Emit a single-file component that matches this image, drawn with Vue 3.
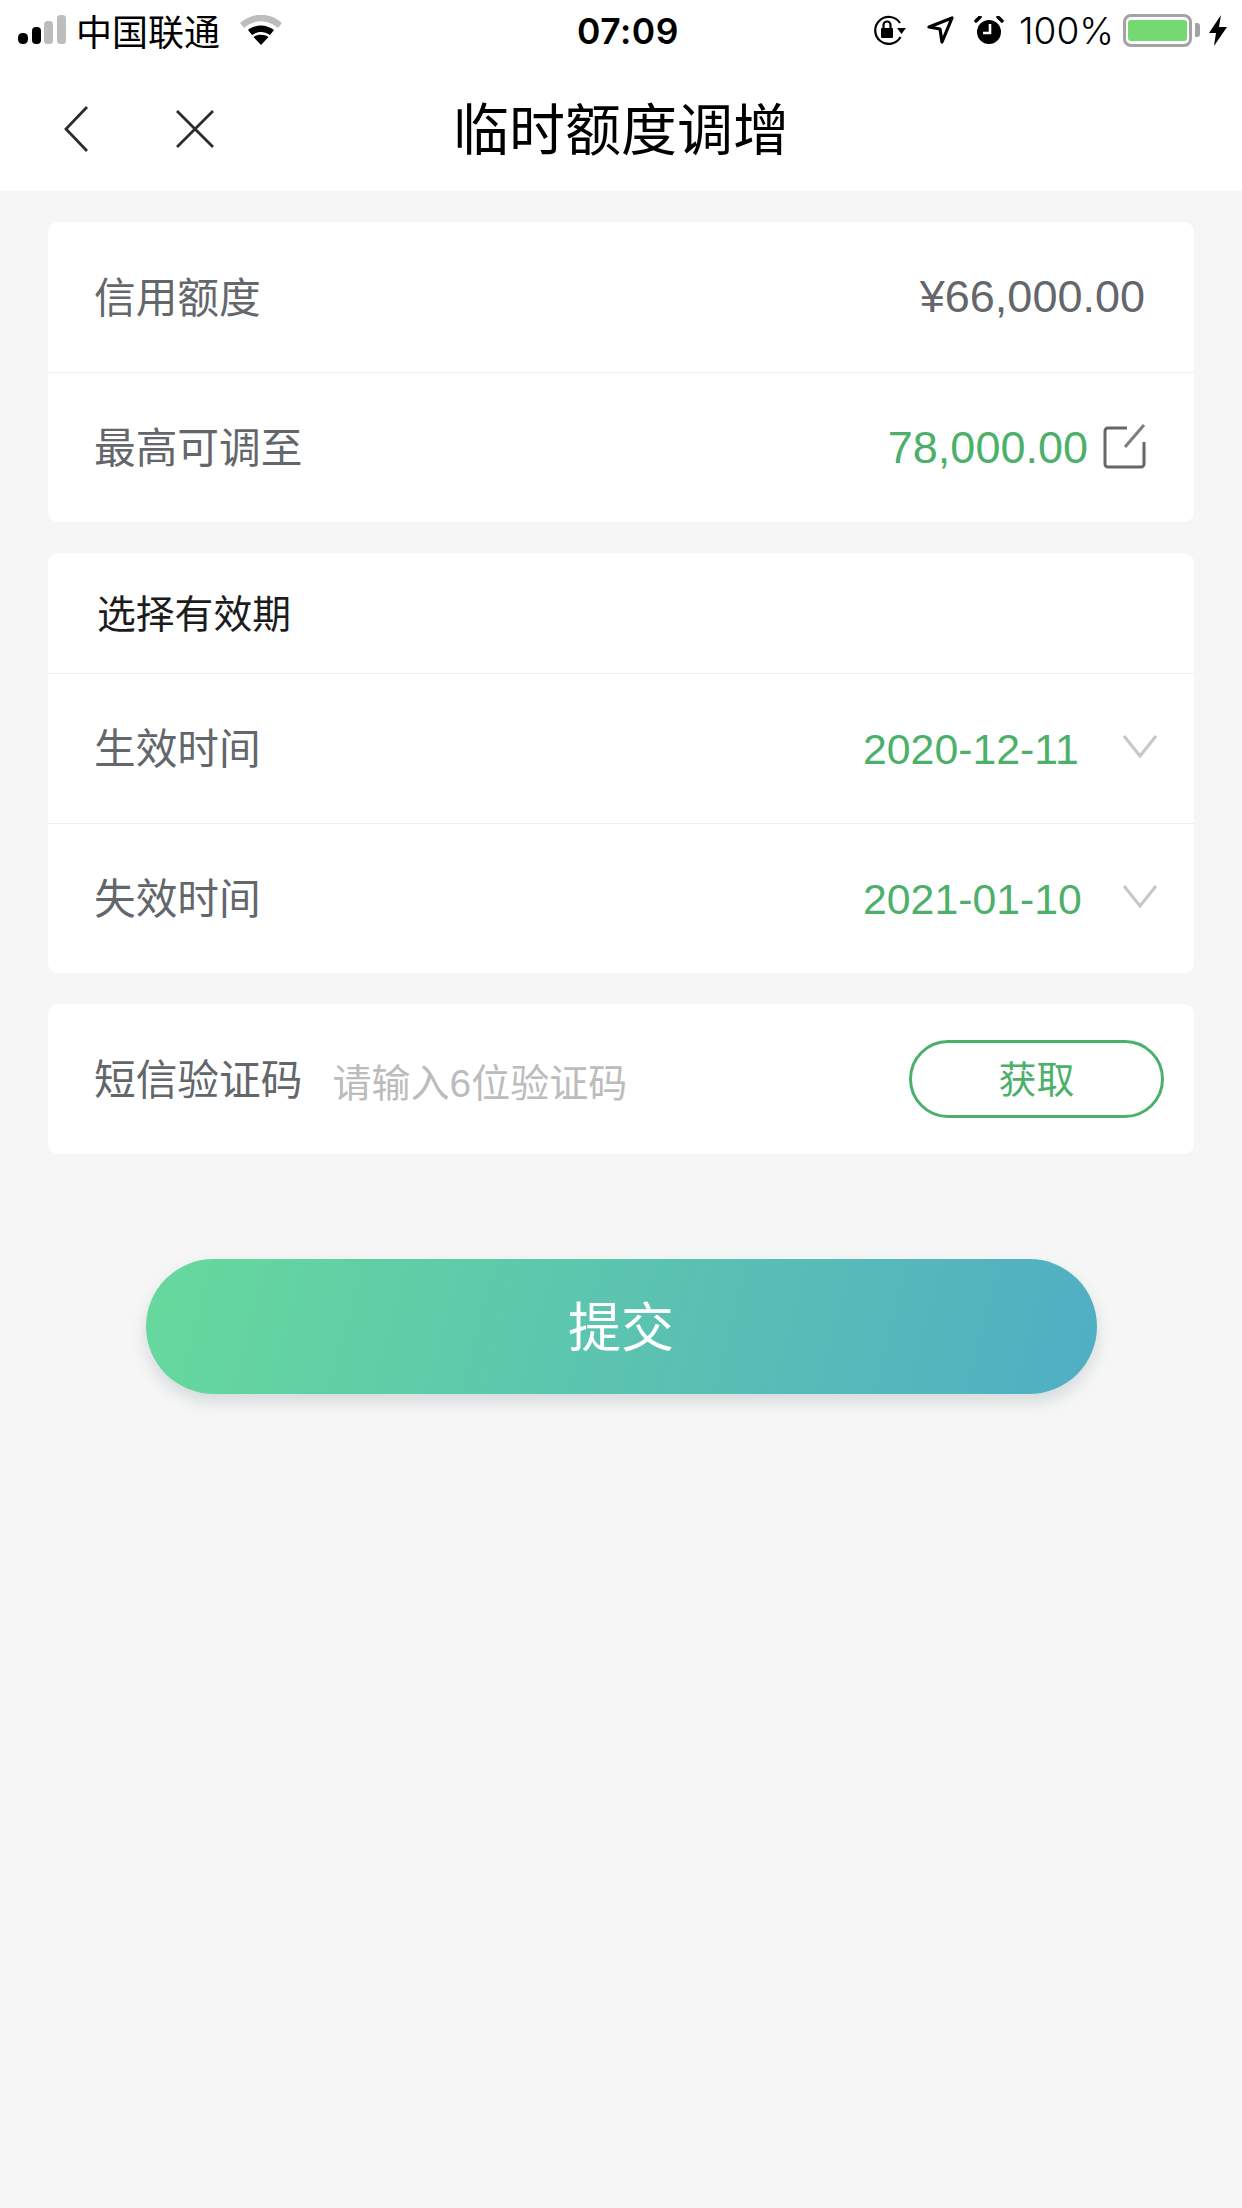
<script setup>
const dates = [
  { label: '生效时间', value: '2020-12-11' },
  { label: '失效时间', value: '2021-01-10' }
]
</script>

<template>
  <div class="page">
    <header class="top">
      <div class="status">
        <div class="status-left">
          <svg class="signal" width="48" height="30" viewBox="0 0 48 30">
            <rect x="0" y="18" width="10" height="11" rx="4.500" fill="#000" />
            <rect x="14" y="12" width="9" height="17" rx="4" fill="#000" />
            <rect x="26" y="6" width="9" height="23" rx="3.500" fill="#bdbdbd" />
            <rect x="39" y="0" width="9" height="29" rx="3.500" fill="#bdbdbd" />
          </svg>
          <span class="carrier">中国联通</span>
          <svg class="wifi" width="42" height="30" viewBox="0 0 42 30">
            <path d="M0 8C12-3 30-3 42 8l-4 5C27 4 15 4 4 13Z" fill="#bdbdbd" />
            <path d="M8 15c8-6 18-6 26 0l-4 5c-6-4-12-4-18 0Z" fill="#000" />
            <path d="M13.500 22c4-3 11-3 15 0L21 30Z" fill="#000" />
          </svg>
        </div>
        <span class="time">07:09</span>
        <div class="status-right">
          <svg width="33" height="30" viewBox="0 0 33 30">
            <path d="M27 8A13.500 13.500 0 1 0 27.500 22" fill="none" stroke="#000" stroke-width="2.200" />
            <path d="M24 13h9l-4.500 6Z" fill="#000" />
            <rect x="8" y="13" width="12" height="10" rx="1" fill="#000" />
            <path d="M10.500 13v-3a3.500 3.500 0 0 1 7 0v3" fill="none" stroke="#000" stroke-width="2.200" />
          </svg>
          <svg class="loc" width="27" height="28" viewBox="0 0 27 28">
            <path d="M2 11 25 2 15 26 13 13Z" fill="none" stroke="#000" stroke-width="3.200" stroke-linejoin="round" />
          </svg>
          <svg class="alarm" width="30" height="28" viewBox="0 0 30 28">
            <ellipse cx="15" cy="16" rx="12" ry="12" fill="#000" />
            <path d="M16 8v9H9" fill="none" stroke="#fff" stroke-width="2.600" />
            <path d="M2 5 6 1M28 5 24 1" stroke="#000" stroke-width="3.500" stroke-linecap="round" />
          </svg>
          <span class="percent">100%</span>
          <div class="battery"><div class="battery-fill"></div></div>
          <div class="nub"></div>
          <svg class="bolt" width="18" height="31" viewBox="0 0 18 31">
            <path d="M12 0 0 18h7L5 31 18 12h-8Z" fill="#000" />
          </svg>
        </div>
      </div>
      <nav class="nav">
        <div class="nav-icons">
          <svg width="24" height="46" viewBox="0 0 24 46">
            <path d="M23 1 2 23l21 22" fill="none" stroke="#2b2b2b" stroke-width="2.800" />
          </svg>
          <svg class="close" width="38" height="38" viewBox="0 0 38 38">
            <path d="M1 1 37 37M37 1 1 37" fill="none" stroke="#2b2b2b" stroke-width="2.800" />
          </svg>
        </div>
        <h1 class="title">临时额度调增</h1>
      </nav>
    </header>

    <main class="content">
      <section class="card">
        <div class="row">
          <span class="label">信用额度</span>
          <span class="value shift">¥66,000.00</span>
        </div>
        <div class="row">
          <span class="label">最高可调至</span>
          <div class="value-wrap">
            <span class="value green">78,000.00</span>
            <svg class="edit" width="43" height="46" viewBox="0 0 43 46">
              <path d="M24 5H5a3 3 0 0 0-3 3v33a3 3 0 0 0 3 3h33a3 3 0 0 0 3-3V19" fill="none" stroke="#63676b" stroke-width="3" />
              <path d="M22 24 41 2" fill="none" stroke="#7a7e83" stroke-width="3" />
            </svg>
          </div>
        </div>
      </section>

      <section class="card">
        <div class="section-title">选择有效期</div>
        <div v-for="d in dates" :key="d.label" class="row">
          <span class="label">{{ d.label }}</span>
          <div class="date-wrap">
            <span class="date">{{ d.value }}</span>
            <svg class="chev" width="34" height="23" viewBox="0 0 34 23">
              <path d="M1 1 17 21 33 1" fill="none" stroke="#c6c8cc" stroke-width="3.200" />
            </svg>
          </div>
        </div>
      </section>

      <section class="card">
        <div class="row sms">
          <span class="label">短信验证码</span>
          <span class="placeholder">请输入6位验证码</span>
          <button class="get" type="button">获取</button>
        </div>
      </section>

      <button class="submit" type="button">提交</button>
    </main>
  </div>
</template>

<style>
html, body { margin: 0; background: #f6f6f6; }
</style>

<style scoped>
.page {
  width: 1242px;
  height: 2208px;
  background: #f6f6f6;
  font-family: "Liberation Sans", "Noto Sans CJK SC", sans-serif;
  overflow: hidden;
}
.top { background: #fff; height: 191px; }
.status {
  height: 60px;
  display: grid;
  grid-template-columns: 1fr auto 1fr;
  align-items: center;
  color: #000;
}
.status-left { display: flex; align-items: center; padding-left: 18px; }
.carrier { font-size: 36px; margin-left: 10px; line-height: 60px; font-family: "Noto Sans CJK SC", sans-serif; font-weight: 400; }
.wifi { margin-left: 20px; }
.time { font-family: Inter, "Liberation Sans", sans-serif; font-size: 35.500px; font-weight: 600; letter-spacing: 0.5px; padding-left: 14px; padding-top: 2px; }
.status-right { display: flex; align-items: center; justify-content: flex-end; padding-right: 15px; }
.loc { margin-left: 21px; }
.alarm { margin-left: 20px; }
.percent { font-size: 37px; margin-left: 15px; font-family: Inter, "Liberation Sans", sans-serif; font-weight: 300; }
.battery {
  width: 69px;
  height: 33px;
  margin-left: 9px;
  box-sizing: border-box;
  border: 3px solid #a3a3a3;
  border-radius: 8px;
  padding: 3px 2px;
}
.battery-fill { height: 100%; background: #74d970; border-radius: 3px; }
.nub { width: 5px; height: 14px; background: #a3a3a3; border-radius: 0 3px 3px 0; margin-left: 3px; }
.bolt { margin-left: 9px; }
.nav {
  height: 131px;
  display: grid;
  grid-template-columns: 1fr auto 1fr;
  align-items: center;
}
.nav-icons { display: flex; align-items: center; padding-left: 64px; padding-top: 7px; }
.close { margin-left: 88px; }
.title { margin: 0; font-size: 56px; font-weight: 400; color: #000; font-family: "Noto Sans CJK SC", sans-serif; line-height: 1; grid-column: 2; }
.content { padding: 31px 48px 0; display: flex; flex-direction: column; gap: 31px; }
.card { background: #fff; border-radius: 10px; overflow: hidden; }
.row {
  height: 150px;
  box-sizing: border-box;
  display: flex;
  align-items: center;
  justify-content: space-between;
  padding: 0 46px;
  border-top: 1px solid #eeeeee;
}
.card > .row:first-child { border-top: 0; }
.label { font-size: 41.700px; color: #63676b; font-family: "Noto Sans CJK SC", sans-serif; padding-bottom: 5px; }
.value { font-size: 45px; color: #63676b; }
.value.shift { margin-right: 3px; }
.value.green { color: #4db06a; }
.value-wrap { display: flex; align-items: center; margin-right: 6px; }
.edit { margin-left: 15px; margin-right: -4px; margin-bottom: 3px; }
.section-title {
  height: 120px;
  display: flex;
  align-items: center;
  padding-left: 49px;
  padding-bottom: 5px;
  box-sizing: border-box;
  font-size: 38.800px;
  color: #1c1c1c;
  font-family: "Noto Sans CJK SC", sans-serif;
}
.date-wrap { display: flex; align-items: center; margin-right: -9px; }
.date { font-size: 42.800px; color: #4db06a; width: 222px; white-space: nowrap; padding-top: 2px; }
.chev { margin-left: 38px; margin-top: -5px; }
.sms { justify-content: flex-start; padding-right: 30px; }
.placeholder { font-size: 39px; color: #bcbcbc; margin-left: 30px; padding-top: 2px; white-space: nowrap; }
.get {
  margin-left: auto;
  width: 255px;
  height: 78px;
  box-sizing: border-box;
  border: 3px solid #4db06a;
  border-radius: 39px;
  background: #fff;
  color: #4db06a;
  font-size: 38px;
  font-family: "Noto Sans CJK SC", sans-serif;
  padding: 0 0 6px;
}
.submit {
  align-self: center;
  width: 951px;
  height: 135px;
  margin-top: 74px;
  border: 0;
  border-radius: 68px;
  background: linear-gradient(105deg, #67d99c 0%, #50aec4 100%);
  box-shadow: 0 8px 16px rgba(80, 110, 110, 0.2);
  color: #fff;
  font-size: 53px;
  font-family: "Noto Sans CJK SC", sans-serif;
  padding: 0 0 5px;
}
</style>
